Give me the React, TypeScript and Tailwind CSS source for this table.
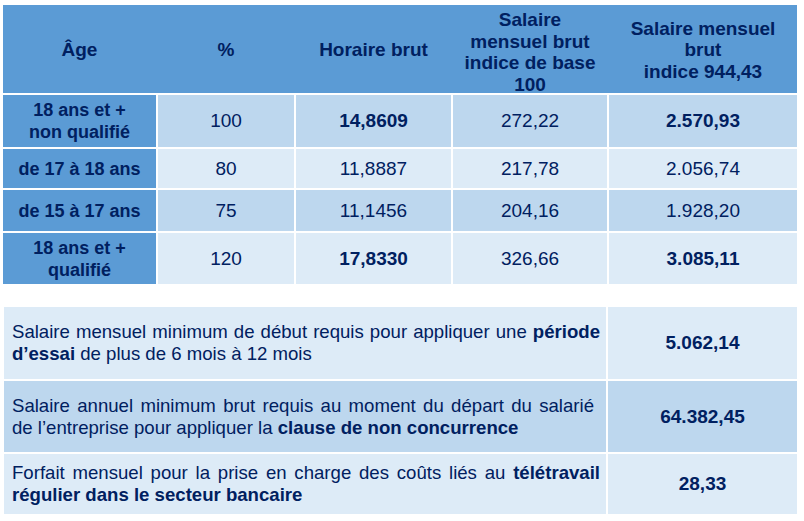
import React from 'react';

const cols = 'grid grid-cols-[153px_136px_155px_154px_188px] gap-x-[2px]';

type Row = {
  age: React.ReactNode;
  pct: string;
  hour: string;
  base: string;
  month: string;
  bold: boolean;
  light: boolean;
  h: string;
};

const rows: Row[] = [
  {
    age: (
      <>
        18 ans et +
        <br />
        non qualifié
      </>
    ),
    pct: '100',
    hour: '14,8609',
    base: '272,22',
    month: '2.570,93',
    bold: true,
    light: false,
    h: 'h-[52px]',
  },
  {
    age: 'de 17 à 18 ans',
    pct: '80',
    hour: '11,8887',
    base: '217,78',
    month: '2.056,74',
    bold: false,
    light: true,
    h: 'h-[39px]',
  },
  {
    age: 'de 15 à 17 ans',
    pct: '75',
    hour: '11,1456',
    base: '204,16',
    month: '1.928,20',
    bold: false,
    light: false,
    h: 'h-[41px]',
  },
  {
    age: (
      <>
        18 ans et +
        <br />
        qualifié
      </>
    ),
    pct: '120',
    hour: '17,8330',
    base: '326,66',
    month: '3.085,11',
    bold: true,
    light: true,
    h: 'h-[51px]',
  },
];

const Cell = ({children, className = ''}: {children: React.ReactNode; className?: string}) => (
  <div className={`flex items-center justify-center text-center ${className}`}>{children}</div>
);

export default function App() {
  return (
    <div
      className="min-h-screen bg-white text-[#002060] pt-[5px]"
      style={{fontFamily: '"Liberation Sans", Arial, sans-serif'}}
    >
      {/* grille des salaires */}
      <div className="ml-[3px] w-[794px] flex flex-col gap-y-[2px]">
        <div className={`${cols} h-[88px] bg-[#5B9BD5] text-[19px] leading-[21.5px] font-bold`}>
          <Cell>Âge</Cell>
          <Cell>%</Cell>
          <Cell>Horaire brut</Cell>
          <Cell className="pt-[4px]">
            Salaire
            <br />
            mensuel brut
            <br />
            indice de base
            <br />
            100
          </Cell>
          <Cell>
            Salaire mensuel
            <br />
            brut
            <br />
            indice 944,43
          </Cell>
        </div>

        {rows.map((r, i) => {
          const bg = r.light ? 'bg-[#DDEBF7]' : 'bg-[#BDD7EE]';
          const strong = r.bold ? 'font-bold' : '';
          return (
            <div key={i} className={`${cols} ${r.h} text-[19px] leading-[22px]`}>
              <Cell className="bg-[#5B9BD5] font-bold text-[18px] leading-[22px]">{r.age}</Cell>
              <Cell className={bg}>{r.pct}</Cell>
              <Cell className={`${bg} ${strong}`}>{r.hour}</Cell>
              <Cell className={bg}>{r.base}</Cell>
              <Cell className={`${bg} ${strong}`}>{r.month}</Cell>
            </div>
          );
        })}
      </div>

      {/* montants minimum */}
      <div className="mt-[23px] ml-[4px] w-[793px] flex flex-col gap-y-[2px] text-[19px] leading-[22px]">
        <div className="grid grid-cols-[602px_189px] gap-x-[2px] h-[72px]">
          <div className="bg-[#DDEBF7] pl-[8px] pr-[6px] flex items-center text-[18.6px]">
            <p className="text-justify">
              Salaire mensuel minimum de début requis pour appliquer une <b>période d’essai</b> de
              plus de 6 mois à 12 mois
            </p>
          </div>
          <Cell className="bg-[#DDEBF7] font-bold">5.062,14</Cell>
        </div>
        <div className="grid grid-cols-[602px_189px] gap-x-[2px] h-[71px]">
          <div className="bg-[#BDD7EE] pl-[8px] pr-[12px] flex items-center text-[18.6px]">
            <p className="text-justify">
              Salaire annuel minimum brut requis au moment du départ du salarié de l’entreprise
              pour appliquer la <b>clause de non concurrence</b>
            </p>
          </div>
          <Cell className="bg-[#BDD7EE] font-bold">64.382,45</Cell>
        </div>
        <div className="grid grid-cols-[602px_189px] gap-x-[2px] h-[60px]">
          <div className="bg-[#DDEBF7] pl-[8px] pr-[6px] flex items-center text-[18.6px]">
            <p className="text-justify">
              Forfait mensuel pour la prise en charge des coûts liés au{' '}
              <b>télétravail régulier dans le secteur bancaire</b>
            </p>
          </div>
          <Cell className="bg-[#DDEBF7] font-bold">28,33</Cell>
        </div>
      </div>
    </div>
  );
}
